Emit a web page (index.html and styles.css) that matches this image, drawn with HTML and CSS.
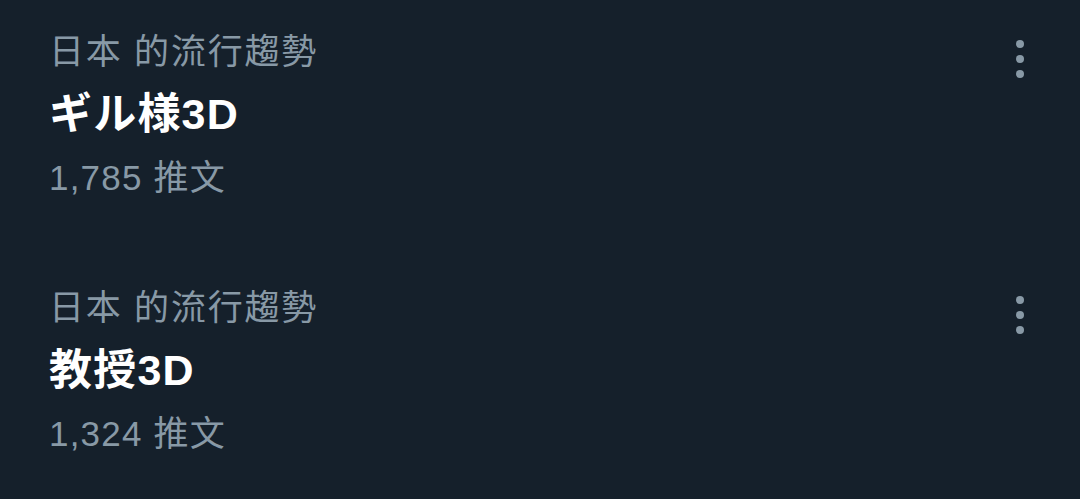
FILE: index.html
```html
<html>
  <head>
    <meta charset="utf-8" />
    <link rel="stylesheet" href="styles.css">
  </head>
  <body>
    <div class="trends">
      <div class="trend">
        <div class="trendBody">
          <div class="context">日本 的流行趨勢</div>
          <div class="name">ギル様3D</div>
          <div class="count">1,785 推文</div>
        </div>
        <button class="more" aria-label="更多">
          <svg viewBox="0 0 40 60" width="40" height="60">
            <circle cx="20" cy="24" r="4" />
            <circle cx="20" cy="39" r="4" />
            <circle cx="20" cy="54" r="4" />
          </svg>
        </button>
      </div>
      <div class="trend">
        <div class="trendBody">
          <div class="context">日本 的流行趨勢</div>
          <div class="name">教授3D</div>
          <div class="count">1,324 推文</div>
        </div>
        <button class="more" aria-label="更多">
          <svg viewBox="0 0 40 60" width="40" height="60">
            <circle cx="20" cy="24" r="4" />
            <circle cx="20" cy="39" r="4" />
            <circle cx="20" cy="54" r="4" />
          </svg>
        </button>
      </div>
    </div>
  </body>
</html>
```

FILE: styles.css
```css
body {
  margin: 0;
  background: #15202b;
  font-family: "Liberation Sans", "Noto Sans CJK TC", sans-serif;
  color: #8899a6;
}

.trend {
  display: flex;
  height: 256px;
  box-sizing: border-box;
  padding: 20px 40px 0 49px;
}
.trendBody {
  flex: 1;
}
.context,
.name,
.count {
  line-height: 63px;
  white-space: nowrap;
}
.context {
  font-size: 35px;
  letter-spacing: 1.8px;
}
.name {
  font-size: 43px;
  font-weight: bold;
  color: #ffffff;
  letter-spacing: 1.2px;
}
.count {
  font-size: 35px;
  letter-spacing: 1.2px;
}

.more {
  align-self: flex-start;
  margin: 0;
  padding: 0;
  border: 0;
  background: none;
  width: 40px;
  height: 60px;
}
.more svg {
  display: block;
  fill: #8899a6;
}
```
